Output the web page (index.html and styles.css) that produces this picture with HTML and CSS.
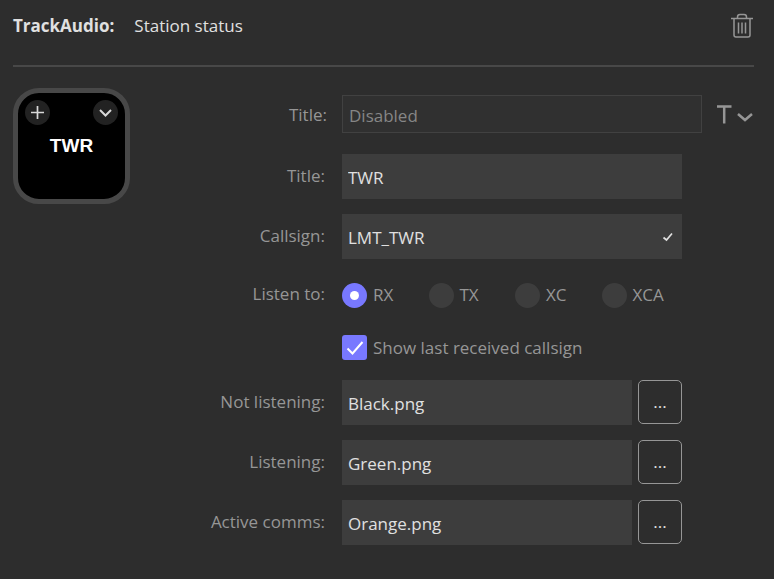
FILE: index.html
```html
<!DOCTYPE html>
<html lang="en">
<head>
<meta charset="utf-8">
<meta name="viewport" content="width=device-width, initial-scale=1">
<title>TrackAudio: Station status</title>
<link rel="stylesheet" href="styles.css">
</head>
<body>
<header class="header">
  <h1 class="plugin">TrackAudio:</h1>
  <span class="action">Station status</span>
  <button class="icon-button delete" type="button" aria-label="Delete">
    <svg width="24" height="26" viewBox="0 0 24 26" fill="none" stroke="currentColor" stroke-width="1.5">
      <path d="M1 5.500H23M7.500 5.500V4Q7.500 1.500 10 1.500H14Q16.500 1.500 16.500 4V5.500M4 5.500V22Q4 24 6 24H18Q20 24 20 22V5.500M8.500 9.500V20.500M12 9.500V20.500M15.500 9.500V20.500"/>
    </svg>
  </button>
</header>
<main class="main">
  <section class="key" aria-label="Key preview">
    <div class="key-tools">
      <button class="round" type="button" aria-label="Add state">
        <svg width="15" height="15" viewBox="0 0 15 15" fill="none" stroke="currentColor" stroke-width="1.700"><path d="M7.500 1V14M1 7.500H14"/></svg>
      </button>
      <button class="round" type="button" aria-label="Key menu">
        <svg width="15" height="15" viewBox="0 0 15 15" fill="none" stroke="currentColor" stroke-width="2"><path d="M2 5L7.500 10.500L13 5"/></svg>
      </button>
    </div>
    <span class="key-title">TWR</span>
  </section>
  <form class="form">
    <div class="row title-row">
      <label class="label" for="key-title">Title:</label>
      <input class="outlined" id="key-title" type="text" placeholder="Disabled" disabled>
      <button class="icon-button" type="button" aria-label="Title style">
        <svg width="38" height="22" viewBox="0 0 38 22" fill="none" stroke="currentColor" stroke-width="2.500"><path d="M1 3.500H15.500M8.200 3.500V20.500M22 11L29 17L36 11"/></svg>
      </button>
    </div>
    <div class="row">
      <label class="label" for="title">Title:</label>
      <input class="field" id="title" type="text" value="TWR">
    </div>
    <div class="row">
      <label class="label" for="callsign">Callsign:</label>
      <div class="valid">
        <input class="field" id="callsign" type="text" value="LMT_TWR">
        <svg class="valid-mark" width="12" height="10" viewBox="0 0 12 10" fill="none" stroke="currentColor" stroke-width="1.700"><path d="M1.500 5.500L4.500 8L10 1.500"/></svg>
      </div>
    </div>
    <div class="row choice-row" role="radiogroup" aria-labelledby="listen-label">
      <span class="label" id="listen-label">Listen to:</span>
      <div class="radios">
        <label class="choice"><input class="radio" type="radio" name="listen" checked>RX</label>
        <label class="choice"><input class="radio" type="radio" name="listen">TX</label>
        <label class="choice"><input class="radio" type="radio" name="listen">XC</label>
        <label class="choice"><input class="radio" type="radio" name="listen">XCA</label>
      </div>
    </div>
    <div class="row check-row">
      <label class="choice check-choice"><span class="check"><input class="checkbox" type="checkbox" checked><svg class="tick" width="18" height="16" viewBox="0 0 18 16" fill="none" stroke="currentColor" stroke-width="2"><path d="M1.500 8.500L6.500 13.500L16.500 2"/></svg></span>Show last received callsign</label>
    </div>
    <div class="row">
      <label class="label" for="not-listening">Not listening:</label>
      <div class="file">
        <input class="field" id="not-listening" type="text" value="Black.png" readonly>
        <button class="browse" type="button" aria-label="Browse">...</button>
      </div>
    </div>
    <div class="row">
      <label class="label" for="listening">Listening:</label>
      <div class="file">
        <input class="field" id="listening" type="text" value="Green.png" readonly>
        <button class="browse" type="button" aria-label="Browse">...</button>
      </div>
    </div>
    <div class="row">
      <label class="label" for="active">Active comms:</label>
      <div class="file">
        <input class="field" id="active" type="text" value="Orange.png" readonly>
        <button class="browse" type="button" aria-label="Browse">...</button>
      </div>
    </div>
  </form>
</main>
</body>
</html>
```
FILE: styles.css
```css
* {
  box-sizing: border-box;
}

body {
  margin: 0;
  padding: 0 20px 0 13px;
  background: #2d2d2d;
  color: #969696;
  font: 17px/24px "Segoe UI", "Open Sans", "Noto Sans", sans-serif;
}

button,
input {
  margin: 0;
  font: inherit;
}

svg {
  display: block;
}

.header {
  display: flex;
  align-items: center;
  gap: 20px;
  height: 67px;
  padding-bottom: 14px;
  border-bottom: 2px solid #484848;
  color: #e0e0e0;
}

.plugin {
  margin: 0;
  font-size: 17px;
  font-weight: 700;
}

.icon-button {
  padding: 0;
  border: 0;
  background: none;
  color: #969696;
}

.delete {
  margin-left: auto;
}

.main {
  display: flex;
  align-items: flex-start;
  padding-top: 21px;
}

.key {
  flex: none;
  width: 117px;
  height: 116px;
  padding: 7px;
  border: 5px solid #484848;
  border-radius: 26px;
  background: #000;
  color: #fff;
  text-align: center;
}

.key-tools {
  display: flex;
  justify-content: space-between;
}

.round {
  display: grid;
  place-items: center;
  width: 25px;
  height: 25px;
  padding: 0;
  border: 0;
  border-radius: 50%;
  background: #222;
  color: #d8d8d8;
}

.key-title {
  display: block;
  margin-top: 9px;
  font: bold 19px/24px "Liberation Sans", Arial, sans-serif;
}

.form {
  flex: 1;
  display: flex;
  flex-direction: column;
  gap: 15px;
  padding-top: 7px;
}

.row {
  display: grid;
  grid-template-columns: 195px 1fr;
  column-gap: 17px;
  align-items: center;
  margin-right: 72px;
}

.title-row {
  grid-template-columns: 198px 1fr 38px;
  column-gap: 14px;
  margin: 0 0 6px;
}

.label {
  padding-bottom: 2px;
  text-align: right;
}

.title-row .label {
  padding: 2px 1px 0 0;
}

.field,
.outlined {
  width: 100%;
  min-width: 0;
  border-radius: 0;
  outline: 0;
}

.field {
  height: 45px;
  padding: 2px 6px 0;
  border: 0;
  background: #3d3d3d;
  color: #e0e0e0;
}

.outlined {
  height: 38px;
  padding: 2px 6px 0;
  border: 1px solid #414141;
  background: #303030;
}

.outlined::placeholder {
  color: #868686;
  opacity: 1;
}

.valid {
  position: relative;
}

.valid-mark {
  position: absolute;
  right: 8px;
  top: 18px;
  color: #e0e0e0;
}

.choice-row {
  height: 42px;
}

.radios {
  display: grid;
  grid-template-columns: repeat(4, 1fr);
  column-gap: 6px;
}

.choice {
  display: flex;
  align-items: center;
  gap: 6px;
  white-space: nowrap;
}

.radio,
.checkbox {
  appearance: none;
  flex: none;
  width: 25px;
  height: 25px;
  background: #3d3d3d;
}

.radio {
  display: grid;
  place-items: center;
  border-radius: 50%;
}

.radio:checked {
  background: #7878ff;
}

.radio:checked::before {
  content: "";
  width: 9px;
  height: 9px;
  border-radius: 50%;
  background: #fff;
}

.check-row {
  margin-top: 4px;
  margin-bottom: 5px;
}

.check-choice {
  grid-column: 2;
}

.check {
  display: grid;
  place-items: center;
}

.checkbox,
.tick {
  grid-area: 1 / 1;
}

.checkbox {
  display: block;
  border-radius: 3px;
}

.checkbox:checked {
  background: #7878ff;
}

.tick {
  color: #fff;
  pointer-events: none;
}

.file {
  display: grid;
  grid-template-columns: 1fr 44px;
  column-gap: 6px;
}

.browse {
  height: 44px;
  padding: 0;
  border: 1px solid #969696;
  border-radius: 5px;
  background: none;
  color: #e0e0e0;
}
```
